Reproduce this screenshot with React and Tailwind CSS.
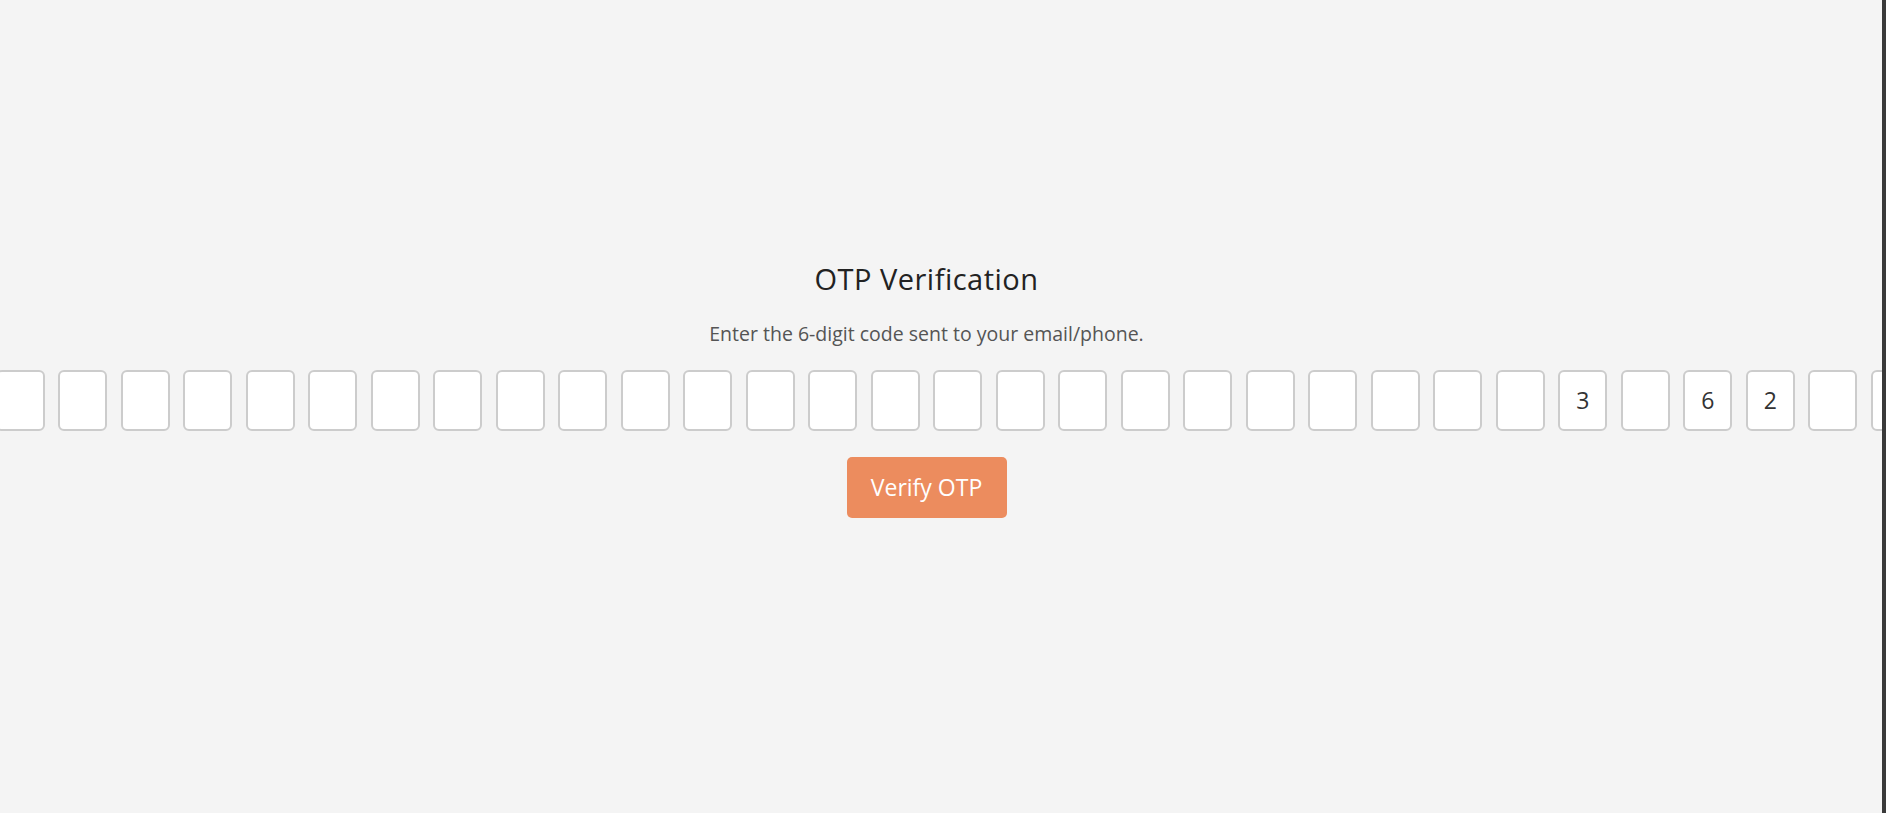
import React from "react";

const values = (() => {
  const arr = Array(32).fill("");
  arr[16 + 10] = "3";
  arr[16 + 12] = "6";
  arr[16 + 13] = "2";
  return arr;
})();

export default function App() {
  return (
    <div
      className="flex h-[813px] w-full overflow-hidden bg-[#f4f4f4]"
      style={{ fontFamily: '"Open Sans", "Liberation Sans", sans-serif' }}
    >
      <div className="flex w-[1853px] shrink-0 flex-col items-center pt-[262px]">
        <h1 className="text-[29px] font-normal leading-[34px] tracking-[0.5px] text-[#222]">
          OTP Verification
        </h1>
        <p className="mt-[24.5px] text-[19.5px] leading-[26px] text-[#555]">
          Enter the 6-digit code sent to your email/phone.
        </p>
        <div className="mt-[23.5px] flex w-full justify-center gap-[13.5px]">
          {values.map((v, i) => (
            <div
              key={i}
              className="flex h-[61px] w-[49px] shrink-0 items-center justify-center rounded-[6px] border-2 border-[#cccccc] bg-white text-[23px] text-[#333]"
            >
              {v}
            </div>
          ))}
        </div>
        <button className="mt-[26px] flex h-[61px] w-[160px] items-center justify-center rounded-[5px] bg-[#ec8c5e] text-[23px] text-white">
          Verify OTP
        </button>
      </div>
      <div className="flex-1" />
      <div className="w-[4px] shrink-0 bg-[#3a3a3a]" />
    </div>
  );
}
